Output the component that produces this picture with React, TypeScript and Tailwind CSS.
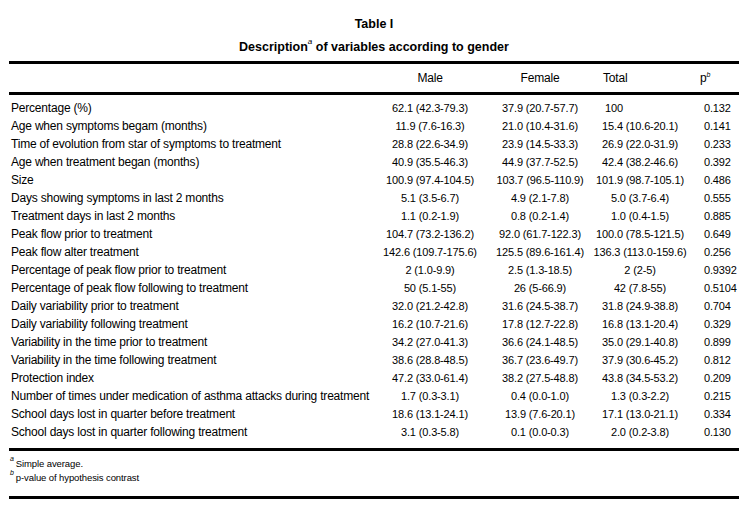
import React from "react";

type Row = [string, string, string, string, string];

const rows: Row[] = [
  ["Percentage (%)", "62.1 (42.3-79.3)", "37.9 (20.7-57.7)", "100", "0.132"],
  ["Age when symptoms begam (months)", "11.9 (7.6-16.3)", "21.0 (10.4-31.6)", "15.4 (10.6-20.1)", "0.141"],
  ["Time of evolution from star of symptoms to treatment", "28.8 (22.6-34.9)", "23.9 (14.5-33.3)", "26.9 (22.0-31.9)", "0.233"],
  ["Age when treatment began (months)", "40.9 (35.5-46.3)", "44.9 (37.7-52.5)", "42.4 (38.2-46.6)", "0.392"],
  ["Size", "100.9 (97.4-104.5)", "103.7 (96.5-110.9)", "101.9 (98.7-105.1)", "0.486"],
  ["Days showing symptoms in last 2 months", "5.1 (3.5-6.7)", "4.9 (2.1-7.8)", "5.0 (3.7-6.4)", "0.555"],
  ["Treatment days in last 2 months", "1.1 (0.2-1.9)", "0.8 (0.2-1.4)", "1.0 (0.4-1.5)", "0.885"],
  ["Peak flow prior to treatment", "104.7 (73.2-136.2)", "92.0 (61.7-122.3)", "100.0 (78.5-121.5)", "0.649"],
  ["Peak flow alter treatment", "142.6 (109.7-175.6)", "125.5 (89.6-161.4)", "136.3 (113.0-159.6)", "0.256"],
  ["Percentage of peak flow prior to treatment", "2 (1.0-9.9)", "2.5 (1.3-18.5)", "2 (2-5)", "0.9392"],
  ["Percentage of peak flow following to treatment", "50 (5.1-55)", "26 (5-66.9)", "42 (7.8-55)", "0.5104"],
  ["Daily variability prior to treatment", "32.0 (21.2-42.8)", "31.6 (24.5-38.7)", "31.8 (24.9-38.8)", "0.704"],
  ["Daily variability following treatment", "16.2 (10.7-21.6)", "17.8 (12.7-22.8)", "16.8 (13.1-20.4)", "0.329"],
  ["Variability in the time prior to treatment", "34.2 (27.0-41.3)", "36.6 (24.1-48.5)", "35.0 (29.1-40.8)", "0.899"],
  ["Variability in the time following treatment", "38.6 (28.8-48.5)", "36.7 (23.6-49.7)", "37.9 (30.6-45.2)", "0.812"],
  ["Protection index", "47.2 (33.0-61.4)", "38.2 (27.5-48.8)", "43.8 (34.5-53.2)", "0.209"],
  ["Number of times under medication of asthma attacks during treatment", "1.7 (0.3-3.1)", "0.4 (0.0-1.0)", "1.3 (0.3-2.2)", "0.215"],
  ["School days lost in quarter before treatment", "18.6 (13.1-24.1)", "13.9 (7.6-20.1)", "17.1 (13.0-21.1)", "0.334"],
  ["School days lost in quarter following treatment", "3.1 (0.3-5.8)", "0.1 (0.0-0.3)", "2.0 (0.2-3.8)", "0.130"],
];

export default function App() {
  return (
    <div className="w-[750px] h-[510px] bg-white text-black font-['Liberation_Sans',Arial,sans-serif] pl-[9px] overflow-hidden">
      <div className="w-[730px]">
        <div className="pt-[16px] h-[32px] leading-[16px] text-center text-[12.5px] font-bold">Table I</div>
        <div className="mt-[7px] h-[16px] leading-[16px] text-center text-[12.5px] font-bold">
          Description<sup className="text-[8px] italic font-normal align-[3px]">a</sup> of variables according to gender
        </div>
        <div className="mt-[6px] h-[3px] bg-black" />
        <div className="flex h-[28px] items-center text-[12px] tracking-[-0.2px]">
          <div className="w-[371px]" />
          <div className="w-[100px] text-center">Male</div>
          <div className="w-[110px] pl-[10px] text-center">Female</div>
          <div className="w-[100px] pl-[13px]">Total</div>
          <div className="w-[49px] pl-[10px]">
            p<sup className="text-[7px] italic align-[2px]">b</sup>
          </div>
        </div>
        <div className="h-[3px] bg-black" />
        <div className="mt-[4px] flex flex-col">
          {rows.map((r, i) => (
            <div key={i} className="flex h-[18px] items-center whitespace-nowrap">
              <div className="w-[371px] pl-[2px] text-[12px] tracking-[-0.2px]">{r[0]}</div>
              <div className="w-[100px] text-center text-[11px] tracking-[-0.15px]">{r[1]}</div>
              <div className="w-[110px] pl-[10px] text-center text-[11px] tracking-[-0.15px]">{r[2]}</div>
              {i === 0 ? (
                <div className="w-[100px] pl-[15px] text-[11px] tracking-[-0.15px]">{r[3]}</div>
              ) : (
                <div className="w-[100px] text-center text-[11px] tracking-[-0.15px]">{r[3]}</div>
              )}
              <div className="w-[49px] pl-[14px] text-[11px] tracking-[-0.15px]">{r[4]}</div>
            </div>
          ))}
        </div>
        <div className="mt-[7px] h-[3px] w-full bg-black" />
        <div className="mt-[6px] pl-[1px] text-[9.5px] tracking-[-0.1px] leading-[14px]">
          <div className="h-[14px]">
            <sup className="text-[7px] italic align-[3px] mr-[2px]">a</sup>Simple average.
          </div>
          <div className="h-[14px]">
            <sup className="text-[7px] italic align-[3px] mr-[2px]">b</sup>p-value of hypothesis contrast
          </div>
        </div>
        <div className="mt-[11px] h-[3px] w-full bg-black" />
      </div>
    </div>
  );
}
